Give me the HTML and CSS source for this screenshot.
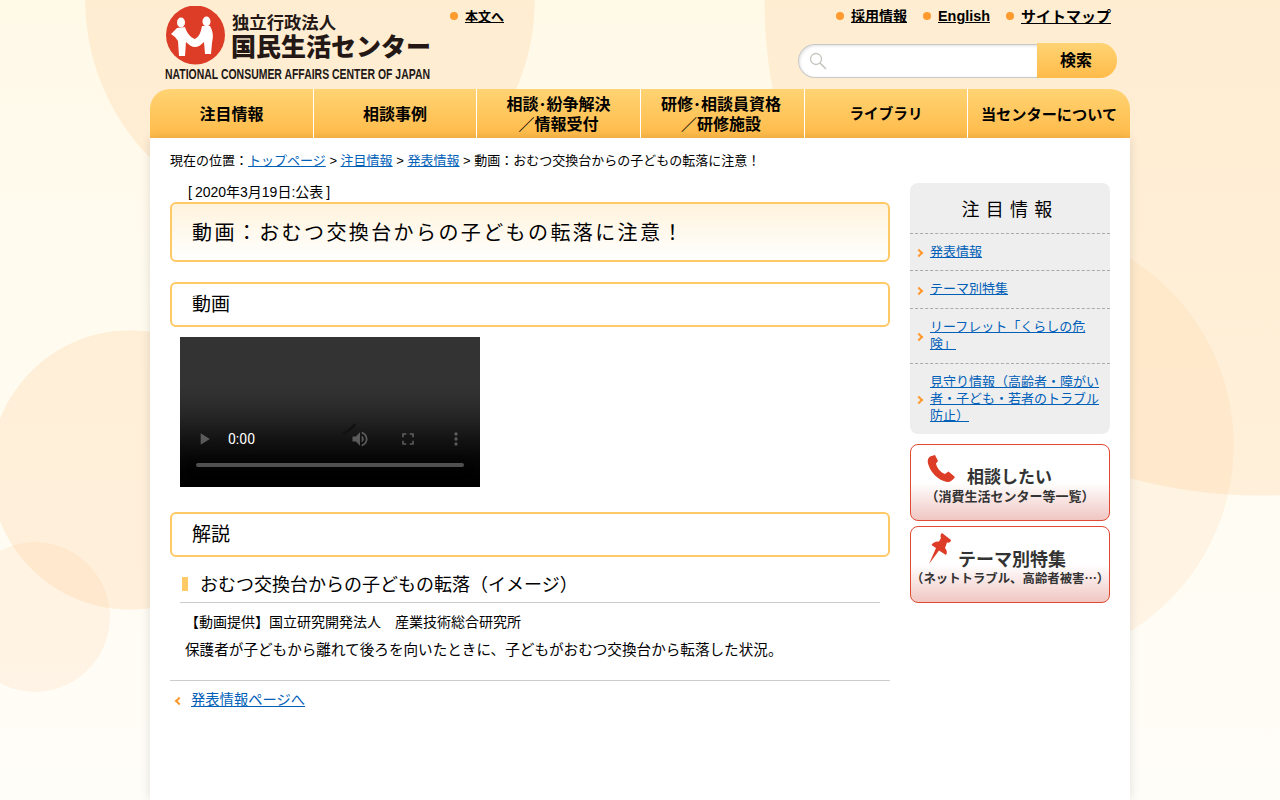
FILE: index.html
```html
<!DOCTYPE html>
<html lang="ja">
<head>
<meta charset="utf-8">
<title>動画&#xFF1A;おむつ交換台からの子どもの転落に注意&#xFF01;</title>
<link rel="stylesheet" href="styles.css">
</head>
<body>
<div class="wrap">
  <header class="header">
    <a class="logo" href="#" aria-label="独立行政法人 国民生活センター">
      <svg width="270" height="76" viewBox="0 0 270 76">
        <circle cx="30.5" cy="29" r="29.5" fill="#dd3c26"/>
        <ellipse cx="16" cy="16.5" rx="4" ry="5" fill="#fff"/>
        <ellipse cx="41.5" cy="15.5" rx="4" ry="5" fill="#fff"/>
        <path fill="#fff" d="M6 28 L12 22 L20 21 C22 27 25 31 30 33 C35 30 36 25 37 20 L45 20 C49 27 48 32 47 37 L46 48 L40 48 L39 36 C36 39 33 41 30 41 C27 41 24 39 21 36 L20 50 L14 50 L13 35 L10 31 Z"/>
        <text class="logo-a" x="67" y="23" textLength="104" lengthAdjust="spacingAndGlyphs">独立行政法人</text>
        <text class="logo-b" x="66" y="50" textLength="200" lengthAdjust="spacingAndGlyphs">国民生活センター</text>
        <text class="logo-c" x="0" y="51" transform="scale(1 1.43)" textLength="265" lengthAdjust="spacingAndGlyphs">NATIONAL CONSUMER AFFAIRS CENTER OF JAPAN</text>
      </svg>
    </a>
    <a class="skip dot-link" href="#"><span class="nudge">本文へ</span></a>
    <div class="tools">
      <ul class="util">
        <li class="dot-link util-first"><a class="nudge" href="#">採用情報</a></li>
        <li class="dot-link"><a href="#">English</a></li>
        <li class="dot-link"><a class="nudge util-wide" href="#">サイトマップ</a></li>
      </ul>
      <form class="search">
        <span class="search-field">
          <svg width="18" height="18" viewBox="0 0 18 18" fill="none" stroke="#c4c4bc"><circle cx="7" cy="7" r="5.5" stroke-width="1.3"/><path d="M11 11 L17 17" stroke-width="1.6"/></svg>
        </span>
        <span class="search-btn">検索</span>
      </form>
    </div>
  </header>

  <nav class="gnav">
    <a href="#">注目情報</a>
    <a href="#">相談事例</a>
    <a href="#">相談･紛争解決<br>／情報受付</a>
    <a class="gnav-t" href="#">研修･相談員資格<br>／研修施設</a>
    <a class="gnav-l" href="#">ライブラリ</a>
    <a class="gnav-s" href="#">当センターについて</a>
  </nav>

  <div class="card">
    <p class="crumbs">現在の位置&#xFF1A;<a href="#">トップページ</a> &gt; <a href="#">注目情報</a> &gt; <a href="#">発表情報</a> &gt; 動画&#xFF1A;おむつ交換台からの子どもの転落に注意&#xFF01;</p>
    <div class="cols">
      <main class="main">
        <p class="date"><span class="date-l">[</span>2020年3月19日:公表<span class="date-r">]</span></p>
        <h1 class="title">動画&#xFF1A;おむつ交換台からの子どもの転落に注意&#xFF01;</h1>
        <h2 class="head">動画</h2>
        <div class="video-box">
          <video class="video" controls width="300" height="150"></video>
          <svg class="spinner" width="16" height="12" viewBox="0 0 16 12" fill="none"><path d="M1.5 10.5 C5 9 9 6 12.5 2" stroke="#111" stroke-width="2.4" stroke-linecap="round"/></svg>
        </div>
        <h2 class="head">解説</h2>
        <h3 class="sub">おむつ交換台からの子どもの転落&#xFF08;イメージ&#xFF09;</h3>
        <p class="text">【動画提供】国立研究開発法人&#x3000;産業技術総合研究所</p>
        <p class="text text-lead">保護者が子どもから離れて後ろを向いたときに、子どもがおむつ交換台から転落した状況。</p>
        <div class="back"><a href="#">発表情報ページへ</a></div>
      </main>
      <aside class="side">
        <div class="menu">
          <div class="menu-title">注目情報</div>
          <ul class="menu-list">
            <li><a href="#">発表情報</a></li>
            <li><a href="#">テーマ別特集</a></li>
            <li><a href="#">リーフレット「くらしの危険」</a></li>
            <li><a href="#">見守り情報&#xFF08;高齢者・障がい者・子ども・若者のトラブル防止&#xFF09;</a></li>
          </ul>
        </div>
        <a class="banner" href="#">
          <svg class="banner-phone" width="28" height="28" viewBox="0 0 28 28"><path fill="#dd3c26" d="M3 1.5 C1 3 0 6 1.5 10 C4 18 11 25 20 27 C23 27.5 26 25 28 22 L21.5 16.5 L18 19 C13 17 10 13 9 8.5 L11 6 L8 0 Z"/></svg>
          <span class="banner-main banner-main-a">相談したい</span>
          <span class="banner-sub">&#xFF08;消費生活センター等一覧&#xFF09;</span>
        </a>
        <a class="banner" href="#">
          <svg class="banner-pin" width="24" height="32" viewBox="0 0 24 32"><path fill="#dd3c26" d="M14 0 L23 7 C23 9 21 10 19 9.5 L17 15 C19 17 19.5 20 18 22 L11 17.5 L1 31 L8 15 L3.5 12 C5 9.5 8 8 11 8.5 L13 5 C12 3 12.5 1 14 0Z"/></svg>
          <span class="banner-main banner-main-b">テーマ別特集</span>
          <span class="banner-sub banner-sub-b">&#xFF08;ネットトラブル、高齢者被害&#x2026;&#xFF09;</span>
        </a>
      </aside>
    </div>
  </div>
</div>
</body>
</html>
```
FILE: styles.css
```css
* { box-sizing: border-box; }
html, body { margin: 0; padding: 0; }
body {
  min-height: 800px;
  overflow: hidden;
  color: #000;
  font-family: "Liberation Sans", "Noto Sans CJK JP", sans-serif;
  font-size: 14px;
  background-color: #fffdf8;
  background-image:
    radial-gradient(circle 75px at 35px 617px, rgba(255,190,130,.15) 99.5%, transparent 100%),
    radial-gradient(circle 140px at 130px 470px, rgba(255,190,120,.2) 99.5%, transparent 100%),
    radial-gradient(circle 220px at 1014px 445px, rgba(255,190,120,.13) 99.7%, transparent 100%),
    radial-gradient(circle 225px at 310px 0, rgba(255,190,120,.2) 99.7%, transparent 100%),
    radial-gradient(circle 496px at 1260px 0, rgba(255,190,120,.2) 99.8%, transparent 100%),
    linear-gradient(#fff9e8, #fffbef 40%, #fffdf8);
}
a { color: #0060b8; }
ul { list-style: none; margin: 0; padding: 0; }
h1, h2, h3, p { margin: 0; font-weight: normal; }

.wrap { width: 980px; margin: 0 auto; }

/* header */
.header { display: flex; height: 89px; padding: 6px 13px 0 15px; }
.logo { display: block; width: 285px; height: 76px; flex: none; }
.logo svg { display: block; }
.logo-a { font: 700 17px "Noto Sans CJK JP", sans-serif; fill: #231815; }
.logo-b { font: 900 25px "Noto Sans CJK JP", sans-serif; fill: #231815; }
.logo-c { font: bold 10.5px "Liberation Sans", sans-serif; fill: #231815; }
.dot-link { display: flex; align-items: center; }
.dot-link::before {
  content: "";
  width: 8px;
  height: 8px;
  margin-right: 7px;
  border-radius: 50%;
  background: #ff9a2e;
}
.nudge { margin-top: -2px; }
.skip { height: 20px; color: #000; font-size: 13px; font-weight: bold; }
.tools { margin-left: auto; display: flex; flex-direction: column; align-items: flex-end; }
.util { display: flex; gap: 16px; margin-right: 6px; height: 37px; }
.util li { height: 20px; font-size: 14.4px; font-weight: bold; }
.util a { color: #000; }
.util .util-first { font-size: 14px; }
.util .util-wide { font-size: 15px; }
.search { display: flex; align-items: flex-end; height: 35px; }
.search-field {
  display: flex;
  align-items: center;
  width: 239px;
  height: 34px;
  padding-left: 10px;
  background: #fff;
  border: 1px solid #c8c8c8;
  border-right: 0;
  border-radius: 17px 0 0 17px;
  box-shadow: inset 1px 1px 3px rgba(0,0,0,.12);
}
.search-btn {
  width: 80px;
  height: 35px;
  padding-right: 2px;
  line-height: 35px;
  text-align: center;
  font-size: 16px;
  font-weight: bold;
  border-radius: 0 17px 17px 0;
  background: linear-gradient(#ffd373, #ffbb4a);
}

/* global nav */
.gnav {
  display: grid;
  grid-template-columns: 163px 163px 164px 164px 163px 163px;
  height: 49px;
  border-radius: 20px 20px 0 0;
  overflow: hidden;
  background: linear-gradient(#ffd373, #ffba48);
}
.gnav a {
  display: flex;
  align-items: center;
  justify-content: center;
  padding-top: 2px;
  text-align: center;
  color: #000;
  font-size: 16px;
  font-weight: bold;
  line-height: 19.5px;
  text-decoration: none;
  border-left: 1px solid #fff;
}
.gnav a:first-child { border-left: 0; }
.gnav .gnav-t { padding-right: 3px; }
.gnav .gnav-l { font-size: 14.6px; }
.gnav .gnav-s { font-size: 15.2px; }

/* card */
.card {
  min-height: 662px;
  padding: 13px 20px 0;
  background: #fff;
  box-shadow: 0 0 10px rgba(0,0,0,.12);
}
.crumbs { font-size: 13px; line-height: 20px; }
.cols { display: flex; gap: 20px; margin-top: 12px; }
.main { width: 720px; flex: none; }
.side { width: 200px; flex: none; }

.date { padding-left: 18px; height: 19px; line-height: 19px; }
.date-l { margin-right: 3px; }
.date-r { margin-left: 3px; }
.title {
  height: 60px;
  padding-left: 20px;
  line-height: 58px;
  font-size: 20px;
  letter-spacing: 2.4px;
  white-space: nowrap;
  border: 2px solid #ffc966;
  border-radius: 6px;
  background: linear-gradient(#fff3dc, #fff);
}
.head {
  height: 45px;
  margin-top: 20px;
  padding-left: 20px;
  line-height: 41px;
  font-size: 19px;
  border: 2px solid #ffc966;
  border-radius: 6px;
}
.video-box { position: relative; padding: 10px 0 0 10px; height: 165px; }
.video { display: block; width: 300px; height: 150px; }
.spinner { position: absolute; left: 172px; top: 96px; }
.sub {
  position: relative;
  margin: 13px 10px 0;
  padding: 3px 0 5px 20px;
  font-size: 18px;
  line-height: 24px;
  border-bottom: 1px solid #ccc;
}
.sub::before {
  content: "";
  position: absolute;
  left: 2px;
  top: 7px;
  width: 6px;
  height: 14px;
  background: #ffc966;
}
.text { padding-left: 15px; line-height: 28px; }
.text-lead { font-size: 14.6px; }
.sub + .text { margin-top: 5px; }
.back {
  margin-top: 16px;
  padding: 9px 0 0 21px;
  position: relative;
  border-top: 1px solid #ccc;
  font-size: 14.3px;
  line-height: 20px;
}
.back::before {
  content: "";
  position: absolute;
  left: 6px;
  top: 17px;
  width: 4px;
  height: 4px;
  border-left: 2px solid #ff9a2e;
  border-bottom: 2px solid #ff9a2e;
  transform: rotate(45deg);
}

/* side */
.menu { background: #eee; border-radius: 8px; overflow: hidden; }
.menu-title {
  height: 50px;
  line-height: 55px;
  text-align: center;
  font-size: 18px;
  letter-spacing: 6.3px;
}
.menu-list li {
  position: relative;
  padding: 9px 10px 10.4px 20px;
  font-size: 13px;
  line-height: 17px;
  border-top: 1px dashed #aaa;
}
.menu-list li:nth-child(3) { padding-bottom: 11px; }
.menu-list li::before {
  content: "";
  position: absolute;
  left: 6px;
  top: 50%;
  width: 4px;
  height: 4px;
  margin-top: -2px;
  border-right: 2px solid #ff9a2e;
  border-top: 2px solid #ff9a2e;
  transform: rotate(45deg);
}
.banner {
  position: relative;
  display: block;
  height: 77px;
  margin-top: 5px;
  text-align: center;
  text-decoration: none;
  color: #333;
  font-weight: bold;
  border: 1px solid #e04a30;
  border-radius: 8px;
  background: linear-gradient(#fff 50%, #f0c6c2);
}
.menu + .banner { margin-top: 10px; }
.banner-phone { position: absolute; left: 16px; top: 10px; }
.banner-pin { position: absolute; left: 17px; top: 6px; }
.banner-main { position: absolute; font-size: 17px; line-height: 24px; white-space: nowrap; }
.banner-main-a { left: 56px; top: 21px; }
.banner-main-b { left: 47px; top: 21px; font-size: 18px; }
.banner-sub { position: absolute; left: 0; right: 0; top: 42px; font-family: "Noto Sans CJK JP", sans-serif; font-size: 13px; line-height: 18px; white-space: nowrap; }
.banner-sub-b { font-size: 12.4px; }
```
